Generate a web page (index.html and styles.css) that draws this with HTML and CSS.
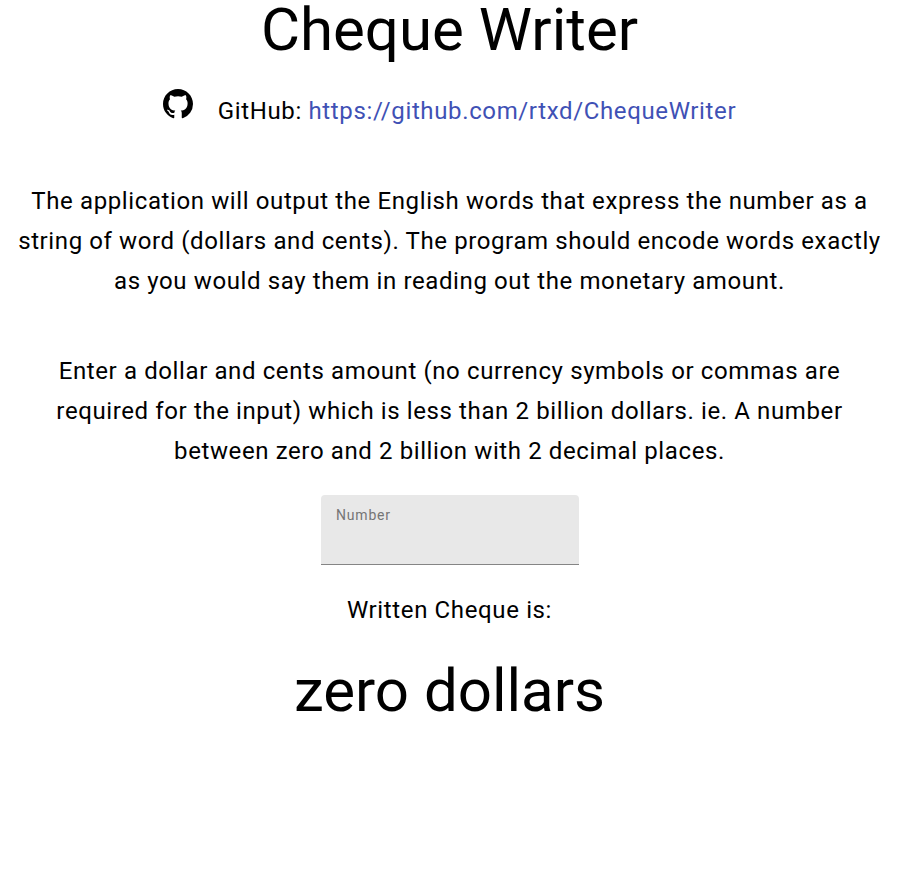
FILE: index.html
```html
<!DOCTYPE html>
<html lang="en">
<head>
    <meta charset="UTF-8">
    <title>Cheque Writer</title>
    <link rel="stylesheet" href="styles.css">
</head>
<body>
    <div class="container">
        <h1 class="title">Cheque Writer</h1>
        <div class="github-row">
            <svg class="github-icon" viewBox="0 0 16 16" width="30" height="30" aria-hidden="true">
                <path d="M8 0C3.58 0 0 3.58 0 8c0 3.54 2.29 6.53 5.47 7.59.4.07.55-.17.55-.38 0-.19-.01-.82-.01-1.49-2.01.37-2.53-.49-2.69-.94-.09-.23-.48-.94-.82-1.13-.28-.15-.68-.52-.01-.53.63-.01 1.08.58 1.23.82.72 1.21 1.87.87 2.33.66.07-.52.28-.87.51-1.07-1.78-.2-3.64-.89-3.64-3.95 0-.87.31-1.59.82-2.15-.08-.2-.36-1.02.08-2.12 0 0 .67-.21 2.2.82.64-.18 1.32-.27 2-.27s1.36.09 2 .27c1.53-1.04 2.2-.82 2.2-.82.44 1.1.16 1.92.08 2.12.51.56.82 1.27.82 2.15 0 3.07-1.87 3.75-3.65 3.95.29.25.54.73.54 1.48 0 1.07-.01 1.93-.01 2.2 0 .21.15.46.55.38A8.01 8.01 0 0 0 16 8c0-4.42-3.58-8-8-8z"/>
            </svg>
            <span class="github-text">GitHub: <a href="https://github.com/rtxd/ChequeWriter">https://github.com/rtxd/ChequeWriter</a></span>
        </div>
        <p class="copy first">The application will output the English words that express the number as a string of word (dollars and cents). The program should encode words exactly as you would say them in reading out the monetary amount.</p>
        <p class="copy second">Enter a dollar and cents amount (no currency symbols or commas are required for the input) which is less than 2 billion dollars. ie. A number between zero and 2 billion with 2 decimal places.</p>
        <div class="field">
            <label class="field-label" for="number">Number</label>
            <input type="text" id="number" class="field-input">
        </div>
        <p class="result-label">Written Cheque is:</p>
        <h2 class="result">zero dollars</h2>
    </div>
</body>
</html>
```
FILE: styles.css
```css
body {
    margin: 0;
    background-color: #fff;
    color: #000;
    font-family: Roboto, sans-serif;
}
.container {
    box-sizing: border-box;
    width: 899px;
    padding: 0 16px;
    text-align: center;
}
.title {
    margin: 0;
    height: 60px;
    font-size: 60px;
    font-weight: 400;
    line-height: 60px;
}
.github-row {
    display: flex;
    justify-content: center;
    margin-top: 31px;
    height: 40px;
}
.github-icon {
    margin-top: -2px;
    margin-right: 25px;
}
.github-text {
    font-size: 24px;
    letter-spacing: 0.63px;
    line-height: 40px;
}
.github-text a {
    color: #3f51b5;
    text-decoration: none;
}
.copy {
    margin: 0;
    font-size: 24px;
    letter-spacing: 0.61px;
    line-height: 40px;
}
.first {
    margin-top: 50px;
}
.second {
    margin-top: 50px;
}
.field {
    position: relative;
    box-sizing: border-box;
    width: 258px;
    height: 70px;
    margin: 24px auto 0;
    border-bottom: 1px solid #858585;
    border-radius: 4px 4px 0 0;
    background-color: #e8e8e8;
}
.field-label {
    position: absolute;
    left: 15.5px;
    top: 12px;
    color: #757575;
    font-size: 14px;
    letter-spacing: 0.8px;
}
.field-input {
    box-sizing: border-box;
    width: 100%;
    height: 100%;
    border: none;
    background: transparent;
    outline: none;
}
.result-label {
    margin: 25px 0 0;
    font-size: 24px;
    letter-spacing: 0.63px;
    line-height: 40px;
}
.result {
    margin: 31px 0 0;
    font-size: 60px;
    font-weight: 400;
    line-height: 60px;
}
```
